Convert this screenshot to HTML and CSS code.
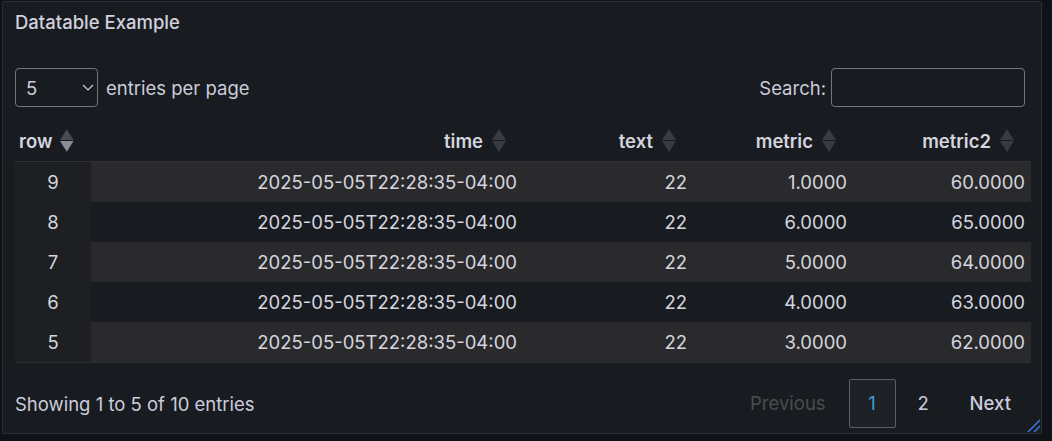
FILE: index.html
```html
<!DOCTYPE html>
<html lang="en">
<head>
<meta charset="utf-8">
<title>Datatable Example</title>
<link rel="stylesheet" href="styles.css">
</head>
<body>
<div class="panel">
  <div class="panel-title">Datatable Example</div>
  <div class="dt">
    <div class="dt-top">
      <div class="dt-length">
        <div class="select-wrap">
          <select class="select">
            <option>5</option>
            <option>10</option>
            <option>25</option>
          </select>
          <svg class="chev" width="12" height="7" viewBox="0 0 12 7"><path d="M1 1 L6 6 L11 1" fill="none" stroke="#ccccdc" stroke-width="1.2"/></svg>
        </div>
        <label>entries per page</label>
      </div>
      <div class="dt-search">
        <label>Search:</label>
        <input class="search" type="search">
      </div>
    </div>
    <table class="tbl">
      <colgroup>
        <col class="c-row"><col class="c-time"><col class="c-text"><col class="c-metric"><col class="c-metric2">
      </colgroup>
      <thead>
        <tr>
          <th class="th-left"><div class="th-in"><span>row</span><svg class="sort" width="14" height="23" viewBox="0 0 14 23"><polygon points="7,0 14,11 0,11" fill="#4a4b52"/><polygon points="0,12 14,12 7,23" fill="#8b8c94"/></svg></div></th>
          <th><div class="th-in"><span>time</span><svg class="sort" width="14" height="23" viewBox="0 0 14 23"><polygon points="7,0 14,11 0,11" fill="#393a40"/><polygon points="0,12 14,12 7,23" fill="#393a40"/></svg></div></th>
          <th><div class="th-in"><span>text</span><svg class="sort" width="14" height="23" viewBox="0 0 14 23"><polygon points="7,0 14,11 0,11" fill="#393a40"/><polygon points="0,12 14,12 7,23" fill="#393a40"/></svg></div></th>
          <th><div class="th-in"><span>metric</span><svg class="sort" width="14" height="23" viewBox="0 0 14 23"><polygon points="7,0 14,11 0,11" fill="#393a40"/><polygon points="0,12 14,12 7,23" fill="#393a40"/></svg></div></th>
          <th><div class="th-in"><span>metric2</span><svg class="sort" width="14" height="23" viewBox="0 0 14 23"><polygon points="7,0 14,11 0,11" fill="#393a40"/><polygon points="0,12 14,12 7,23" fill="#393a40"/></svg></div></th>
        </tr>
      </thead>
      <tbody>
        <tr class="odd"><td class="sorted">9</td><td>2025-05-05T22:28:35-04:00</td><td>22</td><td>1.0000</td><td>60.0000</td></tr>
        <tr class="even"><td class="sorted">8</td><td>2025-05-05T22:28:35-04:00</td><td>22</td><td>6.0000</td><td>65.0000</td></tr>
        <tr class="odd"><td class="sorted">7</td><td>2025-05-05T22:28:35-04:00</td><td>22</td><td>5.0000</td><td>64.0000</td></tr>
        <tr class="even"><td class="sorted">6</td><td>2025-05-05T22:28:35-04:00</td><td>22</td><td>4.0000</td><td>63.0000</td></tr>
        <tr class="odd"><td class="sorted">5</td><td>2025-05-05T22:28:35-04:00</td><td>22</td><td>3.0000</td><td>62.0000</td></tr>
      </tbody>
    </table>
    <div class="dt-bottom">
      <div class="dt-info">Showing 1 to 5 of 10 entries</div>
      <div class="pager">
        <span class="pbtn disabled">Previous</span>
        <span class="pbtn num current">1</span>
        <span class="pbtn num two">2</span>
        <span class="pbtn next">Next</span>
      </div>
    </div>
  </div>
  <svg class="resize" width="14" height="14" viewBox="0 0 14 14"><path d="M1 13 L13 1 M7 13 L13 7" stroke="#3d71d9" stroke-width="1.6" fill="none"/></svg>
</div>
</body>
</html>
```
FILE: styles.css
```css
html, body {
  margin: 0;
  padding: 0;
  background: #111217;
}
body {
  font-family: Inter, "Noto Sans", sans-serif;
  color: #ccccdc;
  font-size: 18.5px;
}
.panel {
  position: relative;
  box-sizing: border-box;
  margin: 1px 0 0 2px;
  width: 1040px;
  height: 433px;
  border: 1px solid #2c2e33;
  border-radius: 2px;
  background: #181b1f;
}
.panel-title {
  height: 41px;
  line-height: 41px;
  padding: 0 12px;
  font-size: 18.5px;
  font-weight: 500;
  color: #d0d0de;
}
.dt {
  padding: 0 9px 0 12px;
}
.dt-top {
  margin-top: 25px;
  height: 39px;
  display: flex;
  justify-content: space-between;
  align-items: center;
}
.dt-length {
  display: flex;
  align-items: center;
  gap: 8px;
}
.select-wrap {
  position: relative;
  width: 83px;
  height: 39px;
}
.select {
  appearance: none;
  -webkit-appearance: none;
  box-sizing: border-box;
  width: 83px;
  height: 39px;
  margin: 0;
  padding: 0 0 0 10px;
  background: #181b1f;
  border: 1px solid #75767d;
  border-radius: 4px;
  color: #ccccdc;
  font-family: inherit;
  font-size: 18.5px;
}
.chev {
  position: absolute;
  left: 67px;
  top: 16px;
}
.dt-search {
  display: flex;
  align-items: center;
  gap: 5px;
  margin-right: 7px;
}
.search {
  box-sizing: border-box;
  width: 194px;
  height: 39px;
  margin: 0;
  background: #181b1f;
  border: 1px solid #75767d;
  border-radius: 4px;
  color: #ccccdc;
}
.tbl {
  margin-top: 13px;
  width: 1016px;
  border-collapse: collapse;
  table-layout: fixed;
}
.c-row { width: 76px; }
.c-time { width: 432px; }
.c-text { width: 170px; }
.c-metric { width: 160px; }
.c-metric2 { width: 178px; }
.tbl th {
  height: 41px;
  padding: 0 17px 0 4px;
  border-bottom: 1px solid #2f3136;
  font-weight: 600;
  color: #d4d5df;
  vertical-align: middle;
}
.th-in {
  display: flex;
  justify-content: flex-end;
  align-items: center;
  gap: 9px;
}
.th-left .th-in {
  justify-content: flex-start;
  gap: 8px;
}
.tbl td {
  height: 40px;
  padding: 0 6px;
  text-align: right;
  vertical-align: middle;
  color: #d4d5df;
}
.tbl td.sorted {
  text-align: center;
  background: #1e1f21;
}
.tbl tr.odd td {
  background: #2a2a2c;
}
.tbl tr.odd td.sorted {
  background: #1e1f21;
}
.tbl tbody {
  border-bottom: 1px solid #2b2d31;
}
.dt-bottom {
  margin-top: 16px;
  display: flex;
  justify-content: space-between;
  align-items: center;
}
.pager {
  display: flex;
  align-items: center;
  margin-right: 0;
}
.pbtn {
  box-sizing: border-box;
  height: 49px;
  line-height: 47px;
  padding: 0 20px;
  border: 1px solid transparent;
  border-radius: 2px;
  color: #ccccdc;
  margin-left: 2px;
}
.pbtn.disabled {
  color: #4b4c52;
}
.pbtn.num {
  width: 47px;
  padding: 0;
  text-align: center;
}
.pbtn.two {
  width: 51px;
}
.pbtn.current {
  border-color: #5d5e65;
  background: #1e2126;
  color: #3b9ed9;
}
.pbtn.next {
  font-weight: 500;
  padding-left: 18px;
}
.resize {
  position: absolute;
  right: 0;
  bottom: 0;
}
```
